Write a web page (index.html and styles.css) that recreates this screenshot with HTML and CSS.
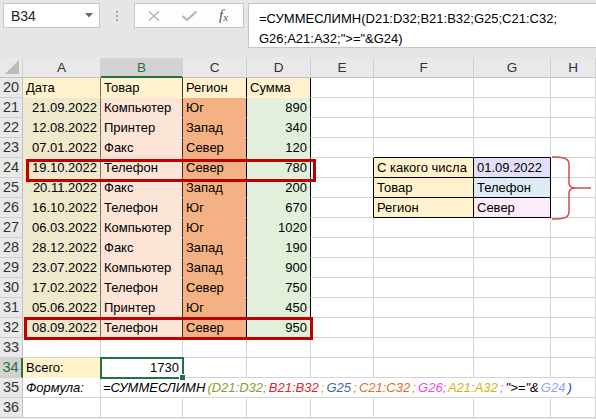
FILE: index.html
```html
<!DOCTYPE html>
<html>
<head>
    <meta charset="UTF-8">
    <link rel="stylesheet" href="styles.css">
</head>
<body>
    <div class="topbar">
        <div class="namebox">
            <span>B34</span>
            <svg width="8" height="5" viewBox="0 0 8 5"><path d="M0 0 L8 0 L4 4.5 Z" fill="#6b6b6b"/></svg>
        </div>
        <div class="grip"><i></i><i></i><i></i></div>
        <div class="fxbtns">
            <svg class="btn-x" width="12" height="10" viewBox="0 0 12 10"><path d="M1 0.5 L11 9.5 M11 0.5 L1 9.5" stroke="#b4b4b4" stroke-width="1.4" fill="none"/></svg>
            <svg class="btn-ok" width="15" height="10" viewBox="0 0 15 10"><path d="M0.5 5 L5 9 L14.5 0.5" stroke="#b4b4b4" stroke-width="2" fill="none"/></svg>
            <span class="btn-fx">f<sub>x</sub></span>
        </div>
        <div class="formula">=СУММЕСЛИМН(D21:D32;B21:B32;G25;C21:C32;<br>G26;A21:A32;"&gt;="&amp;G24)</div>
    </div>

    <div class="sheet">
        <!-- заголовки столбцов -->
        <div class="ch corner"><svg width="14" height="14" viewBox="0 0 14 14"><path d="M14 0 L14 14 L0 14 Z" fill="#bcbcbc"/></svg></div>
        <div class="ch">A</div>
        <div class="ch sel">B</div>
        <div class="ch">C</div>
        <div class="ch">D</div>
        <div class="ch">E</div>
        <div class="ch">F</div>
        <div class="ch">G</div>
        <div class="ch">H</div>

        <div class="rh">20</div>
        <div class="cell hd va">Дата</div>
        <div class="cell hd vb">Товар</div>
        <div class="cell hd vc">Регион</div>
        <div class="cell hd vd">Сумма</div>
        <div class="cell"></div><div class="cell"></div><div class="cell"></div><div class="cell"></div>

        <div class="rh">21</div>
        <div class="cell ta va num">21.09.2022</div>
        <div class="cell tb vb">Компьютер</div>
        <div class="cell tc vc">Юг</div>
        <div class="cell td vd num">890</div>
        <div class="cell"></div><div class="cell"></div><div class="cell"></div><div class="cell"></div>

        <div class="rh">22</div>
        <div class="cell ta va num">12.08.2022</div>
        <div class="cell tb vb">Принтер</div>
        <div class="cell tc vc">Запад</div>
        <div class="cell td vd num">340</div>
        <div class="cell"></div><div class="cell"></div><div class="cell"></div><div class="cell"></div>

        <div class="rh">23</div>
        <div class="cell ta va num">07.01.2022</div>
        <div class="cell tb vb">Факс</div>
        <div class="cell tc vc">Север</div>
        <div class="cell td vd num">120</div>
        <div class="cell"></div><div class="cell top-k"></div><div class="cell top-k"></div><div class="cell"></div>

        <div class="rh">24</div>
        <div class="cell ta va num">19.10.2022</div>
        <div class="cell tb vb">Телефон</div>
        <div class="cell tc vc">Север</div>
        <div class="cell td vd num">780</div>
        <div class="cell left-k"></div>
        <div class="cell fl">С какого числа</div>
        <div class="cell gv g1">01.09.2022</div>
        <div class="cell"></div>

        <div class="rh">25</div>
        <div class="cell ta va num">20.11.2022</div>
        <div class="cell tb vb">Факс</div>
        <div class="cell tc vc">Запад</div>
        <div class="cell td vd num">200</div>
        <div class="cell left-k"></div>
        <div class="cell fl">Товар</div>
        <div class="cell gv g2">Телефон</div>
        <div class="cell"></div>

        <div class="rh">26</div>
        <div class="cell ta va num">16.10.2022</div>
        <div class="cell tb vb">Телефон</div>
        <div class="cell tc vc">Юг</div>
        <div class="cell td vd num">670</div>
        <div class="cell left-k"></div>
        <div class="cell fl">Регион</div>
        <div class="cell gv g3">Север</div>
        <div class="cell"></div>

        <div class="rh">27</div>
        <div class="cell ta va num">06.03.2022</div>
        <div class="cell tb vb">Компьютер</div>
        <div class="cell tc vc">Юг</div>
        <div class="cell td vd num">1020</div>
        <div class="cell"></div><div class="cell"></div><div class="cell"></div><div class="cell"></div>

        <div class="rh">28</div>
        <div class="cell ta va num">28.12.2022</div>
        <div class="cell tb vb">Факс</div>
        <div class="cell tc vc">Запад</div>
        <div class="cell td vd num">190</div>
        <div class="cell"></div><div class="cell"></div><div class="cell"></div><div class="cell"></div>

        <div class="rh">29</div>
        <div class="cell ta va num">23.07.2022</div>
        <div class="cell tb vb">Компьютер</div>
        <div class="cell tc vc">Запад</div>
        <div class="cell td vd num">900</div>
        <div class="cell"></div><div class="cell"></div><div class="cell"></div><div class="cell"></div>

        <div class="rh">30</div>
        <div class="cell ta va num">17.02.2022</div>
        <div class="cell tb vb">Телефон</div>
        <div class="cell tc vc">Север</div>
        <div class="cell td vd num">750</div>
        <div class="cell"></div><div class="cell"></div><div class="cell"></div><div class="cell"></div>

        <div class="rh">31</div>
        <div class="cell ta va num">05.06.2022</div>
        <div class="cell tb vb">Принтер</div>
        <div class="cell tc vc">Юг</div>
        <div class="cell td vd num">450</div>
        <div class="cell"></div><div class="cell"></div><div class="cell"></div><div class="cell"></div>

        <div class="rh">32</div>
        <div class="cell ta va num">08.09.2022</div>
        <div class="cell tb vb">Телефон</div>
        <div class="cell tc vc">Север</div>
        <div class="cell td vd num">950</div>
        <div class="cell"></div><div class="cell"></div><div class="cell"></div><div class="cell"></div>

        <div class="rh">33</div>
        <div class="cell"></div><div class="cell"></div><div class="cell"></div><div class="cell"></div>
        <div class="cell"></div><div class="cell"></div><div class="cell"></div><div class="cell"></div>

        <div class="rh rsel">34</div>
        <div class="cell hd">Всего:</div>
        <div class="cell num">1730</div>
        <div class="cell"></div><div class="cell"></div><div class="cell"></div>
        <div class="cell"></div><div class="cell"></div><div class="cell"></div>

        <div class="rh">35</div>
        <div class="cell it">Формула:</div>
        <div class="cell it wide"><span class="k">=СУММЕСЛИМН </span><span class="c1">(D21:D32; </span><span class="c2">B21:B32</span><span class="c3"> ; </span><span class="c4">G25</span><span class="c5"> ; </span><span class="c5">C21:C32</span><span class="c3"> ; </span><span class="c6">G26; </span><span class="c7">A21:A32</span><span class="c6"> ; </span><span class="k">"&gt;="&amp; </span><span class="c8">G24</span><span class="c9"> )</span></div>

        <div class="rh">36</div>
        <div class="cell"></div><div class="cell"></div><div class="cell"></div><div class="cell"></div>
        <div class="cell"></div><div class="cell"></div><div class="cell"></div><div class="cell"></div>

        <!-- выделения поверх ячеек -->
        <div class="mark mark-24"></div>
        <div class="mark mark-32"></div>
        <div class="active"><i></i></div>
        <svg class="brace" width="48" height="66" viewBox="0 0 48 66">
            <path d="M4 1 C15 1 21 2 21 8 L21 27 C21 30 23 32 28 32 L43 32 M28 32 C23 32 21 34 21 37 L21 56 C21 62 15 63 4 63" stroke="#d24b4b" stroke-width="1.5" fill="none"/>
        </svg>
    </div>
</body>
</html>
```

FILE: styles.css
```css
body {
    margin: 0;
    width: 596px;
    height: 419px;
    overflow: hidden;
    background-color: #e6e6e6;
    font-family: "Liberation Sans", Arial, sans-serif;
    color: #000;
}

/* строка формул */
.topbar {
    display: flex;
    align-items: flex-start;
    height: 58px;
    padding: 3px 0 0 3px;
    box-sizing: border-box;
}

.namebox {
    width: 97px;
    height: 25px;
    box-sizing: border-box;
    border: 1px solid #c6c6c6;
    background: #fff;
    display: flex;
    align-items: center;
    justify-content: space-between;
    padding: 0 6px 0 7px;
    font-size: 14px;
    color: #222;
}

.grip {
    width: 34px;
    display: flex;
    flex-direction: column;
    align-items: center;
    gap: 2px;
    padding-top: 8px;
}

.grip i {
    width: 2px;
    height: 2px;
    background: #a8a8a8;
}

.fxbtns {
    width: 110px;
    height: 25px;
    box-sizing: border-box;
    border: 1px solid #c6c6c6;
    background: #fdfdfd;
    display: flex;
    align-items: center;
}

.btn-x { margin-left: 13px; }
.btn-ok { margin-left: 22px; }

.btn-fx {
    margin-left: 22px;
    font-family: "Liberation Serif", serif;
    font-style: italic;
    font-size: 15px;
    color: #555;
}

.btn-fx sub {
    font-size: 11px;
    vertical-align: 0;
    position: relative;
    top: 1px;
}

.formula {
    margin-left: 4px;
    flex: 1;
    height: 45px;
    box-sizing: border-box;
    border: 1px solid #c6c6c6;
    border-right: none;
    background: #fff;
    padding: 5px 0 0 10px;
    font-size: 13px;
    line-height: 20px;
    white-space: nowrap;
}

/* лист */
.sheet {
    position: relative;
    display: grid;
    grid-template-columns: 23px 78px 82px 64px 64px 63px 100px 77px 45px;
    grid-auto-rows: 20px;
    background: #fff;
    font-size: 13px;
}

.ch {
    background: #e9e9e9;
    border-right: 1px solid #d0d0d0;
    border-bottom: 1px solid #c0c0c0;
    text-align: center;
    line-height: 19px;
    font-size: 13.5px;
    color: #333;
    box-sizing: border-box;
}

.ch.corner {
    display: flex;
    align-items: flex-end;
    justify-content: flex-end;
    padding: 0 3px 3px 0;
}

.ch.sel {
    background: #d2d2d2;
    color: #217346;
    border-bottom: 2px solid #217346;
}

.rh {
    background: #e9e9e9;
    border-right: 1px solid #c0c0c0;
    border-bottom: 1px solid #d0d0d0;
    text-align: center;
    line-height: 19px;
    font-size: 14.5px;
    color: #333;
    box-sizing: border-box;
}

.rh.rsel {
    background: #d2d2d2;
    color: #217346;
    border-right: 2px solid #217346;
}

.cell {
    border-right: 1px solid #d4d4d4;
    border-bottom: 1px solid #d4d4d4;
    box-sizing: border-box;
    padding: 0 3px;
    line-height: 20px;
    white-space: nowrap;
}

.num { text-align: right; }

/* цвета таблицы */
.hd { background: #fff2cc; border-bottom-color: #fff2cc; }
.ta { background: #efe8cc; border-bottom-color: #efe8cc; }
.tb { background: #fce4d6; border-bottom-color: #fce4d6; }
.tc { background: #f4b183; border-bottom-color: #f4b183; }
.td { background: #e2efda; border-bottom-color: #e2efda; }

.va { border-right-color: #6e6e6e; }
.vb { border-right-color: #333; }
.vc { border-right-color: #000; }
.vd { border-right-color: #000; }

/* блок условий */
.top-k { border-bottom-color: #000; }
.left-k { border-right-color: #000; }

.fl {
    background: #fff2cc;
    border-right-color: #000;
    border-bottom-color: #000;
}

.gv {
    border-right-color: #000;
    border-bottom-color: #000;
}

.g1 { background: #e4dff8; }
.g2 { background: #ddebf7; }
.g3 { background: #fcecf9; }

/* строка с формулой */
.it { font-style: italic; }

.wide {
    grid-column: span 7;
    padding-left: 2px;
    word-spacing: -1.5px;
}

.k { color: #000; }
.c1 { color: #8c9c34; }
.c2 { color: #d9262b; }
.c3 { color: #c9a227; }
.c4 { color: #3f68b8; }
.c5 { color: #e0702a; }
.c6 { color: #ea4ce8; }
.c7 { color: #d6b20e; }
.c8 { color: #8ea6f2; }
.c9 { color: #2646c0; }

/* выделения */
.mark {
    position: absolute;
    border: 3px solid #c00000;
    box-sizing: border-box;
    height: 23px;
}

.mark-24 { left: 26px; top: 101px; width: 290px; }
.mark-32 { left: 24px; top: 259px; width: 289px; }

.active {
    position: absolute;
    left: 100px;
    top: 299px;
    width: 84px;
    height: 22px;
    border: 2px solid #217346;
    box-sizing: border-box;
}

.active i {
    position: absolute;
    right: -4px;
    bottom: -4px;
    width: 5px;
    height: 5px;
    background: #217346;
    border: 1px solid #fff;
}

.brace {
    position: absolute;
    left: 548px;
    top: 98px;
}
```
